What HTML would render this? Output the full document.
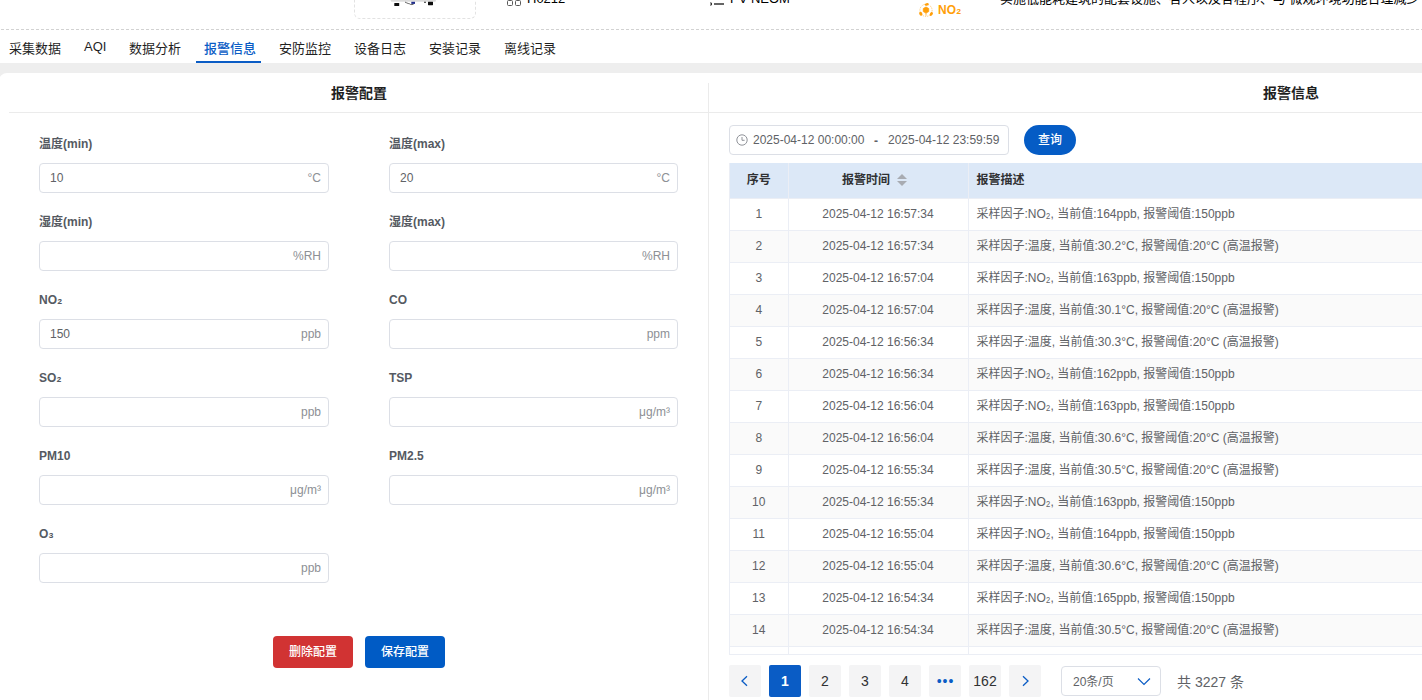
<!DOCTYPE html>
<html lang="zh-CN">
<head>
<meta charset="utf-8">
<title>报警信息</title>
<style>
*{box-sizing:border-box;margin:0;padding:0}
html,body{width:1422px;height:700px;overflow:hidden;background:#fff}
body{font-family:"Liberation Sans","Noto Sans CJK SC",sans-serif;color:#606266;font-size:12px;position:relative}
.abs{position:absolute}
/* top strip */
#top{position:absolute;left:0;top:0;width:1422px;height:30px;background:#fff;overflow:hidden}
#dash{position:absolute;left:1px;top:29px;width:1421px;height:1px;background:repeating-linear-gradient(90deg,#d2d2d2 0 3px,transparent 3px 5px)}
#imgbox{position:absolute;left:354px;top:-60px;width:122px;height:79px;border:1px dashed #e2e2e2;border-radius:6px}
.toptxt{position:absolute;color:#000;font-size:13px;line-height:16px;white-space:nowrap}
/* tabs */
#tabs{position:absolute;left:0;top:30px;width:1422px;height:33px;background:#fff}
.tab{position:absolute;top:11px;font-size:13px;line-height:16px;color:#1f1f1f;white-space:nowrap}
.tab.on{color:#0a5cc5;font-weight:500}
#tabline{position:absolute;left:196px;top:31px;width:65px;height:2px;background:#0a5cc5}
#band{position:absolute;left:0;top:63px;width:1422px;height:637px;background:#eeeeee}
#card{position:absolute;left:-1px;top:73px;width:1440px;height:640px;background:#fff;border-radius:8px 0 0 0}
.ttl{position:absolute;top:85px;font-size:14px;line-height:16px;font-weight:700;color:#1f1f1f;white-space:nowrap}
.hl{position:absolute;height:1px;background:#ebebeb;top:112px}
#vl{position:absolute;left:708px;top:83px;width:1px;height:617px;background:#ebebeb}
/* form */
.lab{position:absolute;font-size:12px;line-height:14px;font-weight:700;color:#555a62;white-space:nowrap}
.inp{position:absolute;width:290px;height:30px;border:1px solid #dcdfe6;border-radius:4px;background:#fff;font-size:12px;line-height:28px;color:#606266}
.inp .v{position:absolute;left:10px;top:0}
.inp .u{position:absolute;right:7px;top:0;color:#8d9095}
.btn{position:absolute;top:636px;width:80px;height:32px;border-radius:4px;color:#fff;font-size:12px;line-height:32px;text-align:center;font-weight:500}
/* right */
#dp{position:absolute;left:729px;top:125px;width:280px;height:30px;border:1px solid #dcdfe6;border-radius:4px;font-size:12px;line-height:28px;color:#606266;white-space:nowrap}
#q{position:absolute;left:1024px;top:125px;width:52px;height:30px;border-radius:15px;background:#055cc5;color:#fff;font-size:12px;line-height:30px;text-align:center;font-weight:500}
#tblwrap{position:absolute;left:729px;top:163px;width:720px;height:492px;overflow:hidden;border:1px solid #ebeef5;border-right:0;border-top:0}
table{border-collapse:collapse;table-layout:fixed;width:720px;font-size:12px;line-height:16px;color:#606266}
th{height:35px;background:#dce8f7;color:#303133;font-weight:700;text-align:center;border-right:1px solid #ebeef5;border-bottom:1px solid #ebeef5}
td{height:32px;text-align:center;border-right:1px solid #ebeef5;border-bottom:1px solid #ebeef5;white-space:nowrap}
tr:nth-child(odd) td{background:#fafafa}
th.l,td.l{text-align:left;padding-left:8px}
.pg{position:absolute;top:665px;width:32px;height:32px;border-radius:2px;background:#f4f4f5;color:#303133;font-size:14px;line-height:32px;text-align:center}
.pg.on{background:#0a5cc5;color:#fff;font-weight:700}
#sel{position:absolute;left:1061px;top:666px;width:100px;height:30px;border:1px solid #dcdfe6;border-radius:4px;font-size:12px;line-height:30px;padding-left:11px;color:#606266}
#tot{position:absolute;left:1177px;top:666px;font-size:14px;line-height:32px;color:#606266;white-space:nowrap}
.sb{display:inline-block;transform:scaleY(1.25);transform-origin:0 82%}
</style>
</head>
<body>
<div id="top">
  <div id="imgbox"></div>
  <svg class="abs" style="left:385px;top:0" width="60" height="10" viewBox="0 0 60 10">
    <defs><linearGradient id="gb" x1="0" y1="0" x2="0" y2="1"><stop offset="0" stop-color="#d6d6d6"/><stop offset="1" stop-color="#e9e9e9"/></linearGradient></defs>
    <path d="M5.500 0h45.500l-.600 1.900h-44z" fill="url(#gb)"/>
    <rect x="9.3" y="3" width="4.9" height="3.1" rx=".4" fill="#0c0c0c"/>
    <rect x="43" y="1.7" width="5" height="3.5" rx=".4" fill="#0c0c0c"/>
    <rect x="26.3" y="1.8" width="3.7" height="2.1" fill="#1f2c8a"/>
    <path d="M20 2.1c1.5.2 2 1.400 3.200 1.400c1.500 0 1.800.9 2.800 1.100l2.500 -.2" stroke="#222" stroke-width=".7" fill="none"/>
    <rect x="39" y="1.700" width="2" height="1" rx=".4" fill="#111"/>
  </svg>
  <svg class="abs" style="left:506px;top:-9px" width="16" height="16" viewBox="0 0 16 16" fill="none" stroke="#5a5a5a" stroke-width="1"><rect x="1.5" y="1.5" width="5" height="5" rx="1"/><rect x="9.5" y="1.5" width="5" height="5" rx="1"/><rect x="1.5" y="9.5" width="5" height="5" rx="1"/><rect x="9.5" y="9.5" width="5" height="5" rx="1"/></svg>
  <div class="toptxt" style="left:527px;top:-9px">H0212</div>
  <svg class="abs" style="left:709px;top:-9.500px" width="16" height="16" viewBox="0 0 16 16" fill="none" stroke="#333" stroke-width="1.4"><path d="M5 3h10M5 8h10M5 13h10"/><path d="M1.5 2v2M1 7.5h1.5v1H1M1 12h1.5v2H1" stroke-width="1"/></svg>
  <div class="toptxt" style="left:730px;top:-9px">PV NEOM</div>
  <svg class="abs" style="left:918px;top:2px" width="16" height="16" viewBox="0 0 16 16" fill="#ff9f0a">
    <circle cx="8" cy="8.3" r="6.1" fill="none" stroke="#ff9f0a" stroke-width=".7" stroke-dasharray="1.3 1" opacity=".75"/>
    <path d="M8 5l2.700 1.500v3.100l-2.700 1.500l-2.700-1.500v-3.100z" stroke="#ff9f0a" stroke-width=".8" stroke-linejoin="round"/>
    <rect x="7.500" y="10.500" width="1" height="3.200" opacity=".7"/>
    <ellipse cx="8.700" cy="2.400" rx="2.100" ry="1.300" transform="rotate(-12 8.700 2.400)"/>
    <ellipse cx="2.800" cy="11.700" rx="1.500" ry="2" transform="rotate(-30 2.800 11.700)"/>
    <ellipse cx="13.300" cy="12" rx="1.400" ry="2" transform="rotate(35 13.300 12)"/>
  </svg>
  <div class="abs" style="left:938px;top:2px;font-size:13px;line-height:16px;font-weight:700;color:#ff9f0a;transform:scaleX(.92);transform-origin:0 0;white-space:nowrap">NO<span class="sb">₂</span></div>
  <div class="toptxt" style="left:1000px;top:-9px">实施低能耗建筑的配套设施、各人以及各程序、与 微观环境功能合理减少 类材求、同步保护</div>
</div>
<div id="dash"></div>
<div id="tabs">
  <div class="tab" style="left:9px">采集数据</div>
  <div class="tab" style="left:84px;top:9px">AQI</div>
  <div class="tab" style="left:129px">数据分析</div>
  <div class="tab on" style="left:204px">报警信息</div>
  <div class="tab" style="left:279px">安防监控</div>
  <div class="tab" style="left:354px">设备日志</div>
  <div class="tab" style="left:429px">安装记录</div>
  <div class="tab" style="left:504px">离线记录</div>
  <div id="tabline"></div>
</div>
<div id="band"></div>
<div id="card"></div>
<div class="ttl" style="left:331px">报警配置</div>
<div class="ttl" style="left:1263px">报警信息</div>
<div class="hl" style="left:9px;width:1413px"></div>
<div id="vl"></div>

<!-- form -->
<div class="lab" style="left:39px;top:137px">温度(min)</div>
<div class="inp" style="left:39px;top:163px"><span class="v">10</span><span class="u">°C</span></div>
<div class="lab" style="left:389px;top:137px">温度(max)</div>
<div class="inp" style="left:389px;top:163px;width:289px"><span class="v">20</span><span class="u">°C</span></div>

<div class="lab" style="left:39px;top:215px">湿度(min)</div>
<div class="inp" style="left:39px;top:241px"><span class="u">%RH</span></div>
<div class="lab" style="left:389px;top:215px">湿度(max)</div>
<div class="inp" style="left:389px;top:241px;width:289px"><span class="u">%RH</span></div>

<div class="lab" style="left:39px;top:293px">NO<span class="sb">₂</span></div>
<div class="inp" style="left:39px;top:319px"><span class="v">150</span><span class="u">ppb</span></div>
<div class="lab" style="left:389px;top:293px">CO</div>
<div class="inp" style="left:389px;top:319px;width:289px"><span class="u">ppm</span></div>

<div class="lab" style="left:39px;top:371px">SO<span class="sb">₂</span></div>
<div class="inp" style="left:39px;top:397px"><span class="u">ppb</span></div>
<div class="lab" style="left:389px;top:371px">TSP</div>
<div class="inp" style="left:389px;top:397px;width:289px"><span class="u">μg/m³</span></div>

<div class="lab" style="left:39px;top:449px">PM10</div>
<div class="inp" style="left:39px;top:475px"><span class="u">μg/m³</span></div>
<div class="lab" style="left:389px;top:449px">PM2.5</div>
<div class="inp" style="left:389px;top:475px;width:289px"><span class="u">μg/m³</span></div>

<div class="lab" style="left:39px;top:527px">O<span class="sb">₃</span></div>
<div class="inp" style="left:39px;top:553px"><span class="u">ppb</span></div>

<div class="btn" style="left:273px;background:#d13333">删除配置</div>
<div class="btn" style="left:365px;background:#005bc5">保存配置</div>

<!-- right -->
<div id="dp">
  <svg class="abs" style="left:6px;top:8px" width="12" height="12" viewBox="0 0 12 12" fill="none" stroke="#909399" stroke-width="1"><circle cx="6" cy="6" r="5.2"/><path d="M6 3v3.3h2.6"/></svg>
  <span class="abs" style="left:23px;top:0">2025-04-12 00:00:00</span>
  <span class="abs" style="left:144px;top:1px;font-weight:700">-</span>
  <span class="abs" style="left:158px;top:0">2025-04-12 23:59:59</span>
</div>
<div id="q">查询</div>
<div id="tblwrap">
<table>
<colgroup><col style="width:58px"><col style="width:180px"><col></colgroup>
<tr><th>序号</th><th>报警时间<svg width="24" height="14" viewBox="0 0 24 14" style="vertical-align:-3px"><path d="M12 1l5 5h-10z" fill="#a8abb2"/><path d="M12 13l5-5h-10z" fill="#a8abb2"/></svg></th><th class="l">报警描述</th></tr>
<tr><td>1</td><td>2025-04-12 16:57:34</td><td class="l">采样因子:NO<span class="sb">₂</span>, 当前值:164ppb, 报警阈值:150ppb</td></tr>
<tr><td>2</td><td>2025-04-12 16:57:34</td><td class="l">采样因子:温度, 当前值:30.2°C, 报警阈值:20°C (高温报警)</td></tr>
<tr><td>3</td><td>2025-04-12 16:57:04</td><td class="l">采样因子:NO<span class="sb">₂</span>, 当前值:163ppb, 报警阈值:150ppb</td></tr>
<tr><td>4</td><td>2025-04-12 16:57:04</td><td class="l">采样因子:温度, 当前值:30.1°C, 报警阈值:20°C (高温报警)</td></tr>
<tr><td>5</td><td>2025-04-12 16:56:34</td><td class="l">采样因子:温度, 当前值:30.3°C, 报警阈值:20°C (高温报警)</td></tr>
<tr><td>6</td><td>2025-04-12 16:56:34</td><td class="l">采样因子:NO<span class="sb">₂</span>, 当前值:162ppb, 报警阈值:150ppb</td></tr>
<tr><td>7</td><td>2025-04-12 16:56:04</td><td class="l">采样因子:NO<span class="sb">₂</span>, 当前值:163ppb, 报警阈值:150ppb</td></tr>
<tr><td>8</td><td>2025-04-12 16:56:04</td><td class="l">采样因子:温度, 当前值:30.6°C, 报警阈值:20°C (高温报警)</td></tr>
<tr><td>9</td><td>2025-04-12 16:55:34</td><td class="l">采样因子:温度, 当前值:30.5°C, 报警阈值:20°C (高温报警)</td></tr>
<tr><td>10</td><td>2025-04-12 16:55:34</td><td class="l">采样因子:NO<span class="sb">₂</span>, 当前值:163ppb, 报警阈值:150ppb</td></tr>
<tr><td>11</td><td>2025-04-12 16:55:04</td><td class="l">采样因子:NO<span class="sb">₂</span>, 当前值:164ppb, 报警阈值:150ppb</td></tr>
<tr><td>12</td><td>2025-04-12 16:55:04</td><td class="l">采样因子:温度, 当前值:30.6°C, 报警阈值:20°C (高温报警)</td></tr>
<tr><td>13</td><td>2025-04-12 16:54:34</td><td class="l">采样因子:NO<span class="sb">₂</span>, 当前值:165ppb, 报警阈值:150ppb</td></tr>
<tr><td>14</td><td>2025-04-12 16:54:34</td><td class="l">采样因子:温度, 当前值:30.5°C, 报警阈值:20°C (高温报警)</td></tr>
<tr><td>15</td><td>2025-04-12 16:54:04</td><td class="l">采样因子:NO<span class="sb">₂</span>, 当前值:164ppb, 报警阈值:150ppb</td></tr>
</table>
</div>

<div class="pg" style="left:729px"><svg class="abs" style="left:11px;top:10px" width="9" height="12" viewBox="0 0 9 12" fill="none" stroke="#0a5cc5" stroke-width="1.3"><path d="M7 1.300L2 6l5 4.700"/></svg></div>
<div class="pg on" style="left:769px">1</div>
<div class="pg" style="left:809px">2</div>
<div class="pg" style="left:849px">3</div>
<div class="pg" style="left:889px">4</div>
<div class="pg" style="left:929px;color:#0a5cc5;letter-spacing:1px;text-indent:1px">•••</div>
<div class="pg" style="left:969px">162</div>
<div class="pg" style="left:1009px"><svg class="abs" style="left:12px;top:10px" width="9" height="12" viewBox="0 0 9 12" fill="none" stroke="#0a5cc5" stroke-width="1.3"><path d="M2 1.300L7 6l-5 4.700"/></svg></div>
<div id="sel">20条/页<svg class="abs" style="left:75px;top:10px" width="14" height="10" viewBox="0 0 14 10" fill="none" stroke="#0a5cc5" stroke-width="1.15"><path d="M1 1.500l6 6 6-6"/></svg></div>
<div id="tot">共 3227 条</div>
</body>
</html>
